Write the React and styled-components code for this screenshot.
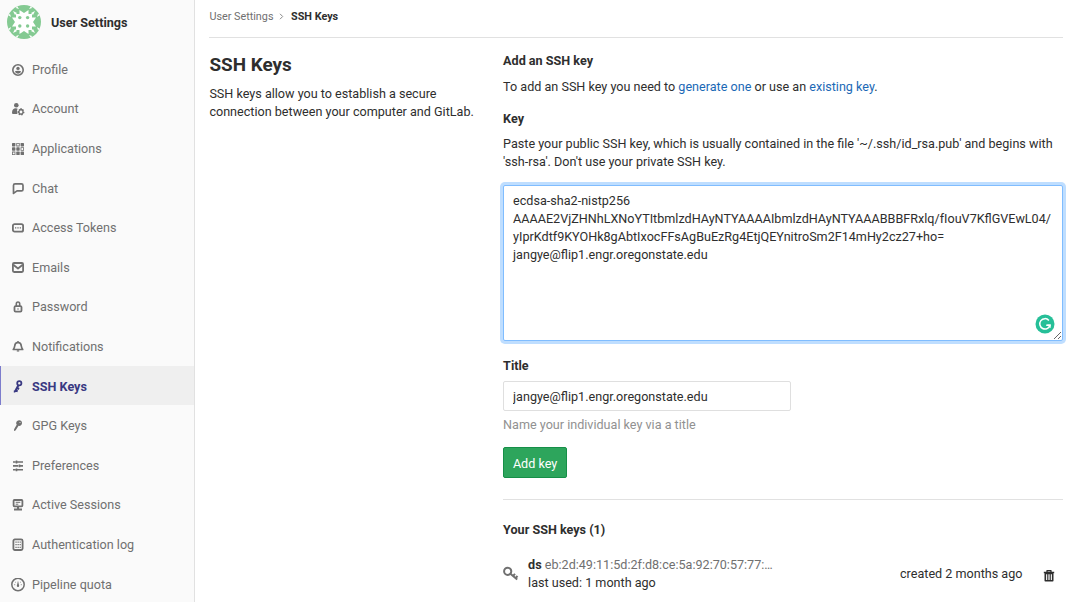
import React from "react";
import styled, { createGlobalStyle } from "styled-components";

const GlobalStyle = createGlobalStyle`
  *, *::before, *::after { box-sizing: border-box; }
  body {
    margin: 0;
    background: #fff;
    color: #2e2e2e;
    font: 400 12.6px/18px Roboto, "Noto Sans", sans-serif;
    overflow: hidden;
  }
  h3, h4, p { margin: 0; }
`;

const Page = styled.div`
  display: flex;
  height: 602px;
  overflow: hidden;
`;

const Sidebar = styled.nav`
  flex: 0 0 195px;
  background: #fafafa;
  border-right: 1px solid #e1e1e1;
`;

const SidebarHeader = styled.div`
  display: flex;
  align-items: center;
  gap: 10px;
  height: 45px;
  padding: 0 0 1px 7px;
  font-weight: 700;
`;

const SidebarTitle = styled.span`
  padding-top: 2px;
`;

const NavList = styled.ul`
  list-style: none;
  margin: 0;
  padding: 4px 0 0;
`;

const NavItem = styled.li`
  display: flex;
  align-items: center;
  gap: 7px;
  height: 39.6px;
  padding: 2px 0 0 11px;
  color: ${(p) => (p.$active ? "#393982" : "#707070")};
  font-weight: ${(p) => (p.$active ? 700 : 400)};
  background: ${(p) => (p.$active ? "#efefef" : "transparent")};
  box-shadow: ${(p) => (p.$active ? "inset 1px 0 0 #7c7ccc" : "none")};
`;

const Icon = styled.svg`
  flex: none;
  display: block;
  width: ${(p) => p.$size || 14}px;
  height: ${(p) => p.$size || 14}px;
  fill: none;
  stroke: currentColor;
  stroke-width: 1.8;
  stroke-linejoin: round;
`;

const Main = styled.main`
  flex: 1;
  min-width: 0;
  padding: 0 9px 0 14.4px;
`;

const Breadcrumbs = styled.div`
  display: flex;
  align-items: center;
  height: 38px;
  padding-bottom: 3px;
  border-bottom: 1px solid #e1e1e1;
  font-size: 10.8px;
  color: #707070;
`;

const Chevron = styled.svg`
  width: 5px;
  height: 7px;
  margin: 0 6.6px 1px 6px;
  fill: none;
  stroke: #8a8a8a;
  stroke-width: 1;
`;

const Current = styled.strong`
  color: #2e2e2e;
`;

const Columns = styled.div`
  display: grid;
  grid-template-columns: 280px 560px;
  column-gap: 13.7px;
`;

const Intro = styled.section`
  padding-top: 16px;
`;

const Heading = styled.h3`
  font-size: 18.9px;
  line-height: 22px;
  font-weight: 700;
  margin-bottom: 9px;
`;

const Content = styled.section`
  padding-top: 14px;
`;

const Subheading = styled.h4`
  font-size: 12.6px;
  line-height: 18px;
  font-weight: 700;
`;

const Lead = styled.p`
  padding: 8px 0 14px;
`;

const Link = styled.a`
  color: #1b69b6;
`;

const Label = styled.label`
  display: block;
  font-weight: 700;
  padding-bottom: ${(p) => (p.$tight ? 6 : 7)}px;
`;

const KeyBox = styled.div`
  position: relative;
  height: 156px;
  margin-top: 14px;
`;

const KeyArea = styled.textarea`
  display: block;
  width: 560px;
  height: 156px;
  margin: 0;
  padding: 6px 9px;
  border: 1px solid #80bdff;
  border-radius: 2px;
  outline: none;
  box-shadow: 0 0 0 3px #bfdeff;
  background: #fff;
  color: #2e2e2e;
  font: inherit;
  overflow: hidden;
  resize: vertical;
`;

const Badge = styled.svg`
  position: absolute;
  right: 8px;
  bottom: 7px;
  width: 20px;
  height: 20px;
`;

const TitleGroup = styled.div`
  padding-top: 16px;
`;

const TitleInput = styled.input`
  display: block;
  width: 288px;
  height: 30px;
  padding: 0 9px;
  border: 1px solid #dfdfdf;
  border-radius: 2px;
  color: #2e2e2e;
  background: #fff;
  font: inherit;
`;

const Hint = styled.p`
  padding-top: 5px;
  color: #919191;
`;

const AddButton = styled.button`
  display: block;
  width: 64px;
  height: 31px;
  margin-top: 13px;
  padding: 3px 0 0;
  border: 1px solid #168f48;
  border-radius: 2px;
  background: #2da55c;
  color: #fff;
  font: inherit;
`;

const Divider = styled.hr`
  height: 1px;
  margin: 21px 0 21px;
  border: 0;
  background: #e1e1e1;
`;

const KeyRow = styled.div`
  display: flex;
  align-items: center;
  padding-top: 17px;
`;

const KeyText = styled.div`
  flex: 1;
  padding-left: 9px;
`;

const Fingerprint = styled.span`
  color: #707070;
`;

const Created = styled.span`
  padding-right: 19.6px;
`;

const TrashIcon = styled(Icon)`
  margin: 3px 7px 0 0;
`;

const drawings = {
  profile: (
    <>
      <circle cx="7" cy="7" r="5.2" strokeWidth="1.6" />
      <circle cx="7" cy="5.4" r="1.7" fill="currentColor" stroke="none" />
      <path d="M3.8 8.6Q4.5 7.7 7 7.7t3.2.9Q9.4 10.7 7 10.7T3.8 8.6Z" fill="currentColor" stroke="none" />
    </>
  ),
  account: (
    <g fill="currentColor" stroke="none">
      <circle cx="5.3" cy="3.2" r="2.3" />
      <path d="M1 10.800c0-3 1.4-4.500 3.8-4.500 1 0 1.6.2 1.8.5C5.8 8.500 5.800 10.300 6.500 12H2Q1 12 1 10.800Z" />
      <path fillRule="evenodd" d="M9.300 6.300h1.500l.3 1 1-.3.900 1.200-.6.8.1.5 1 .4-.3 1.400-1 .2-.4.5.1 1-1.300.5-.6-.8h-.6l-.8.600-1.200-.8.3-1-.3-.5-1-.3.1-1.500 1-.2.3-.5-.1-1L8.300 7l.7.300ZM10 8.600a1.400 1.400 0 1 0 0 2.800 1.400 1.400 0 0 0 0-2.800Z" />
    </g>
  ),
  applications: (
    <g fill="currentColor" stroke="none">
      <rect x="1" y="1" width="3.400" height="3.400" rx=".6" />
      <rect x="9.600" y="1" width="3.400" height="3.400" rx=".6" />
      <rect x="1" y="5.300" width="3.400" height="3.400" rx=".6" />
      <rect x="5.300" y="5.300" width="3.400" height="3.400" rx=".6" />
      <rect x="5.300" y="9.600" width="3.400" height="3.400" rx=".6" />
      <rect x="9.600" y="9.600" width="3.400" height="3.400" rx=".6" />
      <path fillRule="evenodd" d="M5.300 1h3.400v3.400H5.300ZM6.100 1.800v1.800h1.800V1.800ZM9.600 5.300H13v3.400H9.600ZM10.400 6.100v1.800h1.800V6.100ZM1 9.600h3.400V13H1ZM1.800 10.400v1.800h1.800v-1.800Z" />
    </g>
  ),
  chat: <path d="M4 1.900h6.500q1.500 0 1.500 1.500v4Q12 8.900 10.500 8.900H6L2.500 11.400v-8Q2.500 1.900 4 1.900Z" strokeWidth="1.700" />,
  token: (
    <>
      <rect x="1.900" y="3.100" width="10.200" height="7.500" rx="1.700" />
      <path d="M4 6.900h1.300M6.350 6.900h1.300M8.700 6.900h1.300" strokeWidth="1.400" />
    </>
  ),
  mail: (
    <>
      <rect x="1.900" y="2" width="10.200" height="9" rx="1.200" />
      <path d="m2.300 3.800 4.700 3.700L11.700 3.800" />
    </>
  ),
  lock: (
    <>
      <rect x="3.500" y="6.100" width="7" height="5.600" rx="1.100" />
      <path d="M5.300 6V4q0-2 1.700-2t1.700 2v2" strokeWidth="1.600" />
      <path d="M7 8.200v1.600" strokeWidth="1" />
    </>
  ),
  bell: (
    <>
      <path d="M7 2.300Q3.900 2.500 3.700 6 3.500 7.900 2.300 9.500h9.400Q10.500 7.900 10.300 6 10.100 2.500 7 2.300Z" strokeWidth="1.700" />
      <path d="M5.800 10.900h2.400" strokeWidth="1.300" />
      <path d="M7 1.100v1" strokeWidth="1.400" />
    </>
  ),
  key: (
    <>
      <circle cx="8.300" cy="3.300" r="2.100" strokeWidth="1.800" />
      <path d="M7.400 5.300 4 11.500M6 8l2.100 1M4.600 10.300l2.100 1M4.300 11.400H2.800" strokeWidth="2" />
    </>
  ),
  gpg: (
    <g fill="currentColor" stroke="none">
      <path d="M8.200 1.200a2.900 2.900 0 0 1 2.800 2.900 2.700 2.700 0 0 1-3.400 2.700L4.500 11.500 3 12l.1-1.700 2.600-4.500A2.900 2.900 0 0 1 8.200 1.200Z" />
      <circle cx="9" cy="3.500" r=".5" fill="#fafafa" />
    </g>
  ),
  preferences: (
    <path d="M2 3h2.600M6 3h6M2 6.900h5.300M9 6.900h3M2 10.800h2.600M6 10.800h6M5.500 1.600v2.800M8.500 5.500v2.800M5.500 9.400v2.800" strokeWidth="1.600" />
  ),
  monitor: (
    <>
      <rect x="2.600" y="2" width="8.800" height="6.400" rx=".8" />
      <path d="M4.700 4.300h4.600M4.700 6.200h2.600" strokeWidth="1" />
      <path d="M7 8.600v3M3 11.600h8" strokeWidth="2" />
    </>
  ),
  log: (
    <>
      <rect x="2.400" y="1.400" width="9.200" height="10.600" rx="1.500" />
      <path d="M4.400 4.100h1.300m.8 0h1.300m.8 0h1.200M4.400 6.700h1.300m.8 0h1.300m.8 0h1.200M4.400 9.300h1.300m.8 0h1.300m.8 0h1.200" strokeWidth="1.300" />
    </>
  ),
  quota: (
    <>
      <circle cx="7" cy="6.500" r="6.200" strokeWidth="1.500" />
      <path d="M7 2.800 8.100 7.600Q8.300 9.100 7 9.100T5.900 7.600Z" fill="currentColor" stroke="none" />
      <path d="M3.200 6.700h1m5.600 0h1M4.100 3.900l.7.600M9.900 3.900l-.7.600" strokeWidth=".8" />
    </>
  ),
};

const navItems = [
  ["profile", "Profile"],
  ["account", "Account"],
  ["applications", "Applications"],
  ["chat", "Chat"],
  ["token", "Access Tokens"],
  ["mail", "Emails"],
  ["lock", "Password"],
  ["bell", "Notifications"],
  ["key", "SSH Keys"],
  ["gpg", "GPG Keys"],
  ["preferences", "Preferences"],
  ["monitor", "Active Sessions"],
  ["log", "Authentication log"],
  ["quota", "Pipeline quota"],
];

const Avatar = () => (
  <svg width="34" height="34" viewBox="0 0 34 34">
    <circle cx="17" cy="17" r="17" fill="#84ca92" />
    <g fill="#fff">
      <path d="M9 9h3.500V5l4.500 3 4.500-3v4H25v3.500h4L26 17l3 4.500h-4V25h-3.500v4L17 26l-4.500 3v-4H9v-3.500H5L8 17l-3-4.500h4Z" />
      <path d="m6 6 4 2-2 2ZM28 6l-2 4-2-2ZM28 28l-4-2 2-2ZM6 28l2-4 2 2ZM10 1l2 3-3-1ZM24 1l1 2-3 1ZM33 10l-3 2 1-3ZM33 24l-2 1-1-3ZM24 33l-2-3 3 1ZM10 33l-1-2 3-1ZM1 24l3-2-1 3ZM1 10l2-1 1 3Z" />
    </g>
    <g fill="#84ca92">
      <circle cx="12.800" cy="12.600" r="1.700" />
      <circle cx="20.600" cy="12.600" r="1.700" />
      <circle cx="12.800" cy="21" r="1.700" />
      <circle cx="20.600" cy="21" r="1.700" />
    </g>
  </svg>
);

const publicKey = `ecdsa-sha2-nistp256
AAAAE2VjZHNhLXNoYTItbmlzdHAyNTYAAAAIbmlzdHAyNTYAAABBBFRxlq/fIouV7KflGVEwL04/yIprKdtf9KYOHk8gAbtIxocFFsAgBuEzRg4EtjQEYnitroSm2F14mHy2cz27+ho= jangye@flip1.engr.oregonstate.edu`;

export default function App() {
  return (
    <>
      <GlobalStyle />
      <Page>
        <Sidebar>
          <SidebarHeader>
            <Avatar />
            <SidebarTitle>User Settings</SidebarTitle>
          </SidebarHeader>
          <NavList>
            {navItems.map(([icon, label]) => (
              <NavItem key={icon} $active={icon === "key"}>
                <Icon viewBox="0 0 14 14">{drawings[icon]}</Icon>
                {label}
              </NavItem>
            ))}
          </NavList>
        </Sidebar>
        <Main>
          <Breadcrumbs>
            User Settings
            <Chevron viewBox="0 0 5 7">
              <path d="m1 .8 2.700 2.700L1 6.200" />
            </Chevron>
            <Current>SSH Keys</Current>
          </Breadcrumbs>
          <Columns>
            <Intro>
              <Heading>SSH Keys</Heading>
              <p>SSH keys allow you to establish a secure connection between your computer and GitLab.</p>
            </Intro>
            <Content>
              <Subheading>Add an SSH key</Subheading>
              <Lead>
                To add an SSH key you need to <Link>generate one</Link> or use an <Link>existing key</Link>.
              </Lead>
              <Label htmlFor="key">Key</Label>
              <p>
                Paste your public SSH key, which is usually contained in the file '~/.ssh/id_rsa.pub' and begins with
                'ssh-rsa'. Don't use your private SSH key.
              </p>
              <KeyBox>
                <KeyArea id="key" defaultValue={publicKey} spellCheck={false} />
                <Badge viewBox="0 0 20 20">
                  <circle cx="10" cy="10" r="9.500" fill="#26bf98" />
                  <path d="M13.900 6.400A5.200 5.200 0 1 0 15 11.200H11.200" fill="none" stroke="#fff" strokeWidth="1.500" />
                  <path d="M12 10.500h3.700v3.700Z" fill="#fff" />
                </Badge>
              </KeyBox>
              <TitleGroup>
                <Label htmlFor="title" $tight>Title</Label>
                <TitleInput id="title" defaultValue="jangye@flip1.engr.oregonstate.edu" />
                <Hint>Name your individual key via a title</Hint>
              </TitleGroup>
              <AddButton>Add key</AddButton>
              <Divider />
              <Subheading>Your SSH keys (1)</Subheading>
              <KeyRow>
                <Icon viewBox="0 0 16 16" $size={16} color="#707070">
                  <circle cx="4.700" cy="5.300" r="3.600" strokeWidth="2" />
                  <path d="m7.400 7.800 6.800 5.800M10 10l2-2.200M12.500 12.200l2-2.200" strokeWidth="2" />
                </Icon>
                <KeyText>
                  <div>
                    <strong>ds</strong> <Fingerprint>eb:2d:49:11:5d:2f:d8:ce:5a:92:70:57:77:…</Fingerprint>
                  </div>
                  <div>last used: 1 month ago</div>
                </KeyText>
                <Created>created 2 months ago</Created>
                <TrashIcon viewBox="0 0 14 14">
                  <path d="M1.800 3.500h10.400M5 3V1.700h4V3" strokeWidth="1.300" />
                  <path d="M3.300 4.500h7.400v7.200H3.300Z" strokeWidth="1.600" />
                  <path d="M5.500 5v6.500M7 5v6.500M8.500 5v6.500" strokeWidth=".8" />
                </TrashIcon>
              </KeyRow>
            </Content>
          </Columns>
        </Main>
      </Page>
    </>
  );
}
